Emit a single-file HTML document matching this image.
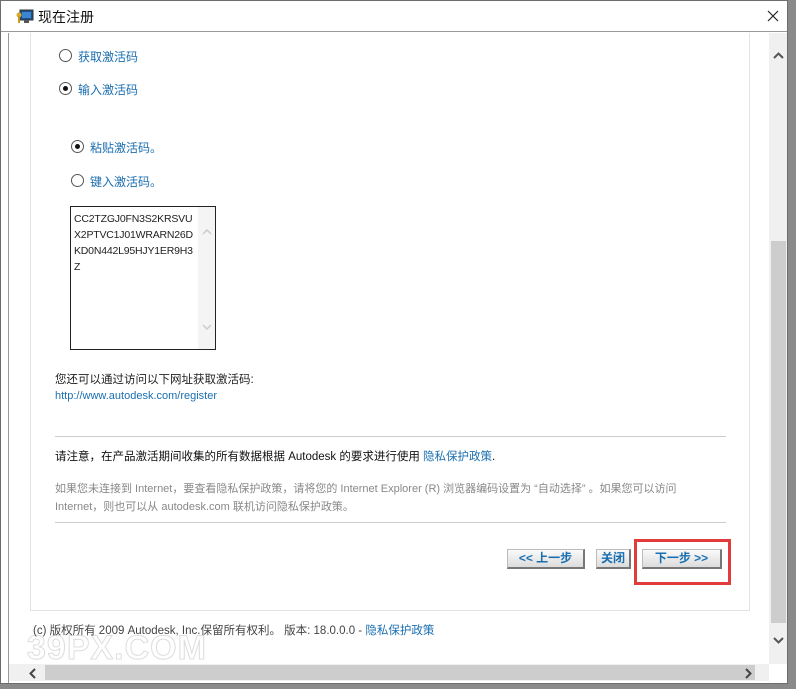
<!DOCTYPE html>
<html><head><meta charset="utf-8"><style>
*{margin:0;padding:0;box-sizing:border-box}
body{width:796px;height:689px;background:#8a8a8a;position:relative;overflow:hidden;font-family:"Liberation Sans","Noto Sans CJK SC",sans-serif;font-size:12px}
.win{position:absolute;left:0;top:0;width:788px;height:684px;background:#fff;border:1px solid #6d6d6d}
.title{position:absolute;left:0;top:0;width:786px;height:31px;border-bottom:1px solid #9a9a9a;background:#fff}
.title span{position:absolute;left:37px;top:6px;font-size:14px;color:#111}
.abs{position:absolute;white-space:nowrap}
.blue{color:#1a6fb0}
.radio{position:absolute;width:13px;height:13px;border:1px solid #555;border-radius:50%;background:#fff}
.radio.on::after{content:"";position:absolute;left:3px;top:3px;width:5px;height:5px;border-radius:50%;background:#111}
.btn{position:absolute;height:20px;background:linear-gradient(#fafafa,#dcdcdc);border:1px solid #bbb;border-right:2px solid #777;border-bottom:2px solid #777;color:#1a6fb0;font-weight:bold;font-size:12px;text-align:center;line-height:17px}
</style></head><body>
<div class="win">
<div class="title">
<svg class="abs" style="left:15px;top:8px" width="18" height="15"><rect x="4" y="1" width="13" height="10" fill="#1e4f8a" stroke="#333"/><rect x="6" y="3" width="9" height="6" fill="#3a86d0"/><rect x="8" y="11" width="5" height="3" fill="#555"/><circle cx="3" cy="6" r="2.5" fill="#d9a92a"/><rect x="2" y="7" width="2" height="7" fill="#c99920"/></svg>
<span>现在注册</span>
<svg class="abs" style="left:766px;top:9px" width="12" height="12"><path d="M1 1L11 11M11 1L1 11" stroke="#222" stroke-width="1.2"/></svg>
</div>
<div class="abs" style="left:7px;top:32px;width:1px;height:650px;background:#999"></div>
<div class="abs" style="left:29px;top:32px;width:1px;height:578px;background:#e3e3e3"></div>
<div class="abs" style="left:748px;top:32px;width:1px;height:578px;background:#e3e3e3"></div>
<div class="abs" style="left:29px;top:609px;width:720px;height:1px;background:#e3e3e3"></div>

<div class="radio" style="left:58px;top:48px"></div><div class="abs blue" style="left:77px;top:47px">获取激活码</div>
<div class="radio on" style="left:58px;top:81px"></div><div class="abs blue" style="left:77px;top:80px">输入激活码</div>
<div class="radio on" style="left:70px;top:139px"></div><div class="abs blue" style="left:89px;top:138px">粘贴激活码。</div>
<div class="radio" style="left:70px;top:173px"></div><div class="abs blue" style="left:89px;top:172px">键入激活码。</div>

<div class="abs" style="left:69px;top:205px;width:146px;height:144px;border:1px solid #222;background:#fff">
<div class="abs" style="left:3px;top:4px;font-size:10.5px;line-height:16px;color:#222;letter-spacing:-0.2px">CC2TZGJ0FN3S2KRSVU<br>X2PTVC1J01WRARN26D<br>KD0N442L95HJY1ER9H3<br>Z</div>
<div class="abs" style="left:127px;top:0;width:17px;height:142px;background:#f4f4f4"></div>
<svg class="abs" style="left:131px;top:22px" width="10" height="6"><path d="M1 5L5 1L9 5" stroke="#ccc" fill="none" stroke-width="1.5"/></svg>
<svg class="abs" style="left:131px;top:117px" width="10" height="6"><path d="M1 1L5 5L9 1" stroke="#ccc" fill="none" stroke-width="1.5"/></svg>
</div>

<div class="abs" style="left:54px;top:370px;color:#222;font-size:11.5px">您还可以通过访问以下网址获取激活码:</div>
<div class="abs blue" style="left:54px;top:389px;font-size:11px">http://www.autodesk.com/register</div>

<div class="abs" style="left:54px;top:435px;width:671px;height:1px;background:#ccc"></div>
<div class="abs" style="left:54px;top:447px;color:#111;font-size:11.5px">请注意，在产品激活期间收集的所有数据根据 Autodesk 的要求进行使用 <span class="blue">隐私保护政策</span>.</div>
<div class="abs" style="left:54px;top:479px;color:#888;font-size:11px;line-height:18px">如果您未连接到 Internet，要查看隐私保护政策，请将您的 Internet Explorer (R) 浏览器编码设置为 “自动选择” 。如果您可以访问<br>Internet，则也可以从 autodesk.com 联机访问隐私保护政策。</div>
<div class="abs" style="left:54px;top:521px;width:671px;height:1px;background:#ccc"></div>

<div class="btn" style="left:506px;top:548px;width:78px">&lt;&lt; 上一步</div>
<div class="btn" style="left:595px;top:548px;width:35px">关闭</div>
<div class="btn" style="left:641px;top:548px;width:80px">下一步 &gt;&gt;</div>
<div class="abs" style="left:633px;top:538px;width:97px;height:46px;border:3px solid #e23b3b"></div>

<div class="abs" style="left:26px;top:628px;font-size:34px;color:#fff;-webkit-text-stroke:1px #ddd;font-weight:bold;letter-spacing:1px">39PX.COM</div>
<div class="abs" style="left:32px;top:621px;color:#444;font-size:11.5px">(c) 版权所有 2009 Autodesk, Inc.保留所有权利。 版本: 18.0.0.0 - <span class="blue">隐私保护政策</span></div>

<div class="abs" style="left:768px;top:32px;width:18px;height:631px;background:#f0f0f0"></div>
<div class="abs" style="left:770px;top:240px;width:15px;height:382px;background:#cdcdcd"></div>
<svg class="abs" style="left:772px;top:51px" width="11" height="7"><path d="M1 6L5.5 1.5L10 6" stroke="#555" fill="none" stroke-width="2"/></svg>
<svg class="abs" style="left:772px;top:636px" width="11" height="7"><path d="M1 1L5.5 5.5L10 1" stroke="#555" fill="none" stroke-width="2"/></svg>
<div class="abs" style="left:8px;top:663px;width:760px;height:17px;background:#f0f0f0"></div>
<div class="abs" style="left:44px;top:664px;width:710px;height:15px;background:#cdcdcd"></div>
<svg class="abs" style="left:28px;top:667px" width="7" height="11"><path d="M6 1L1.5 5.5L6 10" stroke="#444" fill="none" stroke-width="2"/></svg>
<svg class="abs" style="left:744px;top:667px" width="7" height="11"><path d="M1 1L5.5 5.5L1 10" stroke="#444" fill="none" stroke-width="2"/></svg>
</div>
</body></html>
